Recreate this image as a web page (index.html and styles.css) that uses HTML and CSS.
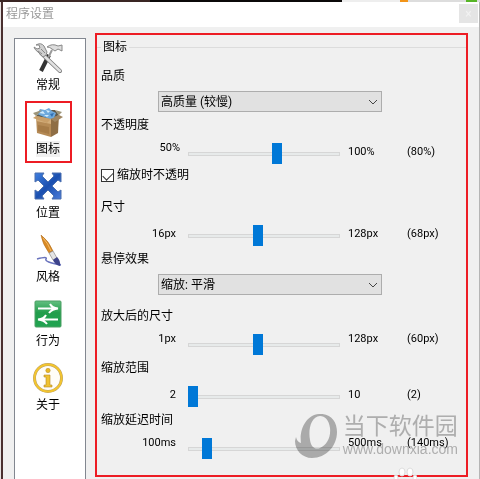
FILE: index.html
```html
<!DOCTYPE html>
<html lang="zh-CN">
<head>
  <meta charset="UTF-8">
  <title>程序设置</title>
  <link rel="stylesheet" href="styles.css">
</head>
<body>
  <div class="window">
    <header class="titlebar">
      <h1>程序设置</h1>
      <button class="close" aria-label="关闭">×</button>
    </header>

    <div class="content">
      <nav class="sidebar">
        <button class="tab">
          <svg viewBox="0 0 30 30">
            <path d="M16 12 8 28" stroke="#333" stroke-width="4"/>
            <path d="M19 7 14 17" stroke="#999" stroke-width="2"/>
            <path d="M8 10 27 28" stroke="#777" stroke-width="4" stroke-linecap="round"/>
            <path d="M8 10 27 28" stroke="#e2e2e2" stroke-width="2.500" stroke-linecap="round"/>
            <path d="M3 2Q8-1 11 3L14 9Q14 13 10 14L6 10Q1 6 1 4L4 6 7 5 6 2z" fill="#cfcfcf" stroke="#888"/>
            <path d="M5 8 9 11M8 6 12 10" stroke="#888"/>
            <path d="M14 4Q19 0 25 3L29 2V8L25 6 22 8 19 6Q17 4 14 4z" fill="#ddd" stroke="#888"/>
          </svg>
          常规
        </button>
        <button class="tab active">
          <svg viewBox="0 0 30 30">
            <path d="M3 9 18 12V30L4 26z" fill="#b58a55"/>
            <path d="M18 12 26 8 25 26 18 30z" fill="#8f6e45"/>
            <path d="M3 9 18 12 18 17 3 14z" fill="#d3ae7c"/>
            <path d="M5 18 16 20V27L5 24z" fill="#a67b47"/>
            <path d="M3 9 9 3 22 3 26 8 18 12z" fill="#5e5a4d"/>
            <path d="M4 7 7 2 12 3 16 1 19 4 23 6 21 11 17 12 11 10z" fill="#6ea9dc"/>
            <path d="M6 6 10 4 12 7zM13 3 17 4 15 6zM11 8 16 8 14 10z" fill="#d4ecfb"/>
            <path d="M17 7 21 6 19 10z" fill="#2f6fb4"/>
            <path d="M3 9 18 12 14 16 0 11z" fill="#c99f69"/>
            <path d="M18 12 26 8 30 10 22 15z" fill="#a08662"/>
            <path d="M3 9 0 6 9 3zM22 3 29 5 26 8z" fill="#9c9478"/>
          </svg>
          <span>图标</span>
        </button>
        <button class="tab">
          <svg viewBox="0 0 30 30">
            <defs>
              <linearGradient id="blue" x1="0" y1="0" x2="1" y2="1">
                <stop offset="0" stop-color="#3f7fe0"/>
                <stop offset=".5" stop-color="#1b50b0"/>
                <stop offset="1" stop-color="#4b7cd8"/>
              </linearGradient>
            </defs>
            <path d="M2 2H11L9 5 15 11 21 5 19 2H28V11L25 9 19 15 25 21 28 19V28H19L21 25 15 19 9 25 11 28H2V19L5 21 11 15 5 9 2 11z" fill="url(#blue)" stroke="#4a6fae"/>
          </svg>
          位置
        </button>
        <button class="tab">
          <svg viewBox="0 0 30 30">
            <path d="M4 24Q15 21 13 24T28 30" fill="none" stroke="#6973bd" stroke-width="1.500"/>
            <path d="M8 0Q16 6 20 16L16 18Q9 8 8 0z" fill="#d98a24" stroke="#a96516" stroke-width=".5"/>
            <path d="M10 3Q15 8 18 16" fill="none" stroke="#f3bb68"/>
            <path d="M16 18 20 16 24 23 20 25z" fill="#e4e4e4" stroke="#777" stroke-width=".6"/>
            <path d="M20 25 24 22Q28 26 27 31 22 30 20 25z" fill="#3d438b"/>
          </svg>
          风格
        </button>
        <button class="tab">
          <svg viewBox="0 0 30 30">
            <defs>
              <linearGradient id="green" x1="0" y1="0" x2="0" y2="1">
                <stop offset="0" stop-color="#63bf80"/>
                <stop offset=".45" stop-color="#219d4b"/>
                <stop offset="1" stop-color="#20a451"/>
              </linearGradient>
            </defs>
            <rect x="2" y="2" width="26" height="26" rx="1" fill="url(#green)" stroke="#4c9f64"/>
            <path d="M5 9.500H24M17 5Q19 9 25 9.500 19 10 16 14M25 20.500H7M13 16Q11 20 5 20.500 11 21 14 25" fill="none" stroke="#fff" stroke-width="2"/>
          </svg>
          行为
        </button>
        <button class="tab">
          <svg viewBox="0 0 30 30">
            <circle cx="15" cy="15" r="13.500" fill="#fffdf7" stroke="#b9a06b" stroke-width="3"/>
            <circle cx="15" cy="15" r="13.500" fill="none" stroke="#f3c52e" stroke-width="2"/>
            <circle cx="15" cy="7.500" r="2.200" fill="#e9b824" stroke="#b58a25" stroke-width=".5"/>
            <path d="M11 12H17V22H19V24H11V22H13V14H11z" fill="#f0c230" stroke="#b58a25" stroke-width=".6"/>
          </svg>
          关于
        </button>
      </nav>

      <main class="panel">
        <fieldset>
          <legend>图标</legend>

          <div class="field">
            <label for="quality">品质</label>
            <div class="select">
              <select id="quality"><option>高质量 (较慢)</option></select>
              <svg viewBox="0 0 10 6"><path d="M1 1 5 5 9 1"/></svg>
            </div>
          </div>

          <div class="field opacity">
            <label for="opacity">不透明度</label>
            <div class="slider">
              <span class="min high">50%</span>
              <input type="range" id="opacity" min="50" max="100" value="80">
              <span>100%</span>
              <output for="opacity">(80%)</output>
            </div>
          </div>

          <label class="check">
            <input type="checkbox" checked>
            缩放时不透明
          </label>

          <div class="field">
            <label for="size">尺寸</label>
            <div class="slider">
              <span class="min">16px</span>
              <input type="range" id="size" min="16" max="128" value="68">
              <span>128px</span>
              <output for="size">(68px)</output>
            </div>
          </div>

          <div class="field effect">
            <label for="hover">悬停效果</label>
            <div class="select">
              <select id="hover"><option>缩放: 平滑</option></select>
              <svg viewBox="0 0 10 6"><path d="M1 1 5 5 9 1"/></svg>
            </div>
          </div>

          <div class="field">
            <label for="zoom">放大后的尺寸</label>
            <div class="slider raised">
              <span class="min">1px</span>
              <input type="range" id="zoom" min="1" max="128" value="60">
              <span>128px</span>
              <output for="zoom">(60px)</output>
            </div>
          </div>

          <div class="field">
            <label for="range">缩放范围</label>
            <div class="slider">
              <span class="min">2</span>
              <input type="range" id="range" min="2" max="10" value="2">
              <span>10</span>
              <output for="range">(2)</output>
            </div>
          </div>

          <div class="field">
            <label for="delay">缩放延迟时间</label>
            <div class="slider raised">
              <span class="min">100ms</span>
              <input type="range" id="delay" min="100" max="500" value="140">
              <span>500ms</span>
              <output for="delay">(140ms)</output>
            </div>
          </div>
        </fieldset>
      </main>
    </div>

    <div class="watermark">
      <svg viewBox="0 0 42 44">
        <path fill-rule="evenodd" d="M24 0C36-1 42 8 42 18 42 32 31 44 17 44 7 44 0 36 0 27L1 23Q2 28 6 29C4 16 11 1 24 0zM25 2C16 3 13 15 15 26 16 33 20 36 25 34 32 31 36 23 35 14 34 6 30 2 25 2z"/>
      </svg>
      <div>
        <p class="brand">当下软件园</p>
        <p class="site">www.downxia.com</p>
      </div>
    </div>
    <svg class="paw" viewBox="0 0 24 12">
      <ellipse cx="9" cy="5" rx="3" ry="4"/>
      <ellipse cx="17" cy="5" rx="3" ry="4"/>
      <ellipse cx="3" cy="11" rx="2" ry="3"/>
      <ellipse cx="22" cy="11" rx="2" ry="3"/>
    </svg>
  </div>
</body>
</html>
```
FILE: styles.css
```css
* { box-sizing: border-box; }
body {
  margin: 0;
  padding: 2px 1px 0 3px;
  height: 100vh;
  overflow: hidden;
  font: 12px/16px Roboto, "Noto Sans CJK SC", sans-serif;
  color: #000;
  /* desktop showing round the window */
  background:
    linear-gradient(90deg, #3a2624 0 150px, #0b0909 150px 342px, #eee 342px 400px, #f29418 400px 408px, #ddd 408px 466px, #57b526 466px 477px, #ddd 477px) 0 0 / 100% 2px no-repeat,
    linear-gradient(90deg, #e6e2e2 0 1px, #4a3030 1px 3px, #b5b5b5 3px);
}
button, select {
  font: inherit;
  color: inherit;
}
.window {
  position: relative;
  display: flex;
  flex-direction: column;
  height: 100%;
  background: #f0f0f0;
}
.titlebar {
  display: flex;
  justify-content: space-between;
  height: 25px;
  padding: 2px 1px 0 3px;
  background: #fff;
}
.titlebar h1 {
  margin: 0;
  font-size: 12px;
  font-weight: normal;
  line-height: 20px;
  color: #999;
}
.close {
  width: 19px;
  height: 19px;
  padding: 0;
  border: none;
  background: #e5e5e5;
  color: #f2f2f2;
}
.content {
  display: flex;
  flex: 1;
  min-height: 0;
  gap: 9px;
  padding: 6px 11px 0 11px;
}

/* category list */
.sidebar {
  display: flex;
  flex-direction: column;
  align-items: center;
  gap: 4px;
  width: 72px;
  margin-top: 5px;
  padding-right: 4px;
  border: 1px solid #828790;
  border-bottom: none;
  background: #fff;
}
.tab {
  display: flex;
  flex-direction: column;
  align-items: center;
  gap: 4px;
  width: 47px;
  height: 62px;
  margin-top: -2px;
  padding: 4px 0 0;
  border: 2px solid transparent;
  background: none;
}
.tab svg {
  width: 30px;
  height: 30px;
  overflow: visible;
}
.tab.active { border-color: #ed1c24; }
.tab.active span { background: #f0f0f0; }

/* settings */
.panel {
  flex: 1;
  margin-bottom: 2px;
  padding-top: 4px;
  border: 2px solid #ed1c24;
}
fieldset {
  margin: 0;
  padding: 13px 0 0 4px;
  border: none;
  border-top: 1px solid #dcdcdc;
}
legend {
  padding: 0 2px;
}
.field {
  display: flex;
  flex-direction: column;
  gap: 7px;
  margin-bottom: 5px;
}
.field.opacity { margin-bottom: 3px; }
.field.effect { margin-bottom: 13px; }
.select {
  position: relative;
  margin: 0 84px 0 57px;
}
.select select {
  display: block;
  width: 100%;
  height: 21px;
  padding: 0 2px;
  border: 1px solid #adadad;
  border-radius: 0;
  background: #e1e1e1;
  appearance: none;
}
.select svg {
  position: absolute;
  top: 8px;
  right: 4px;
  width: 10px;
  height: 6px;
  fill: none;
  stroke: #444;
}
.slider {
  display: grid;
  grid-template-columns: 79px 1fr 51px 59px;
  column-gap: 8px;
  align-items: center;
  height: 24px;
  font-size: 11px;
}
.slider.raised { align-items: start; }
.slider .min {
  padding-right: 4px;
  text-align: right;
}
.slider .high {
  align-self: start;
  padding-right: 0;
}
.slider input {
  align-self: end;
  width: 100%;
  height: 21px;
  margin: 0;
  background: none;
  appearance: none;
}
.slider input::-webkit-slider-runnable-track {
  height: 4px;
  border: 1px solid #d6d6d6;
  background: #e7eaea;
}
.slider input::-webkit-slider-thumb {
  width: 10px;
  height: 21px;
  margin: -10px -1px 0;
  background: #0078d7;
  appearance: none;
}
.check {
  display: flex;
  align-items: center;
  gap: 3px;
  margin-bottom: 16px;
}
.check input {
  width: 13px;
  height: 13px;
  margin: 0;
  border: 1px solid #333;
  background: #fff;
  appearance: none;
}
.check input:checked::before {
  content: "";
  display: block;
  width: 9px;
  height: 5px;
  margin: 2px 1px;
  border: solid #333;
  border-width: 0 0 1px 1px;
  transform: rotate(-45deg);
}

/* site mark over the lower right corner */
.watermark {
  position: absolute;
  right: 21px;
  bottom: 21px;
  display: flex;
  align-items: center;
  gap: 6px;
  color: #b9b9b9;
  mix-blend-mode: multiply;
  pointer-events: none;
}
.watermark svg {
  width: 42px;
  height: 44px;
  fill: #b5b5b5;
}
.watermark p { margin: 0; }
.watermark .brand {
  font-size: 23px;
  line-height: 26px;
}
.watermark .site {
  font: 14px/18px "Liberation Sans", Arial, sans-serif;
}
.paw {
  position: absolute;
  right: 62px;
  bottom: 0;
  width: 24px;
  height: 12px;
  fill: #fff;
  stroke: #ddd;
  stroke-width: 1px;
}
```
